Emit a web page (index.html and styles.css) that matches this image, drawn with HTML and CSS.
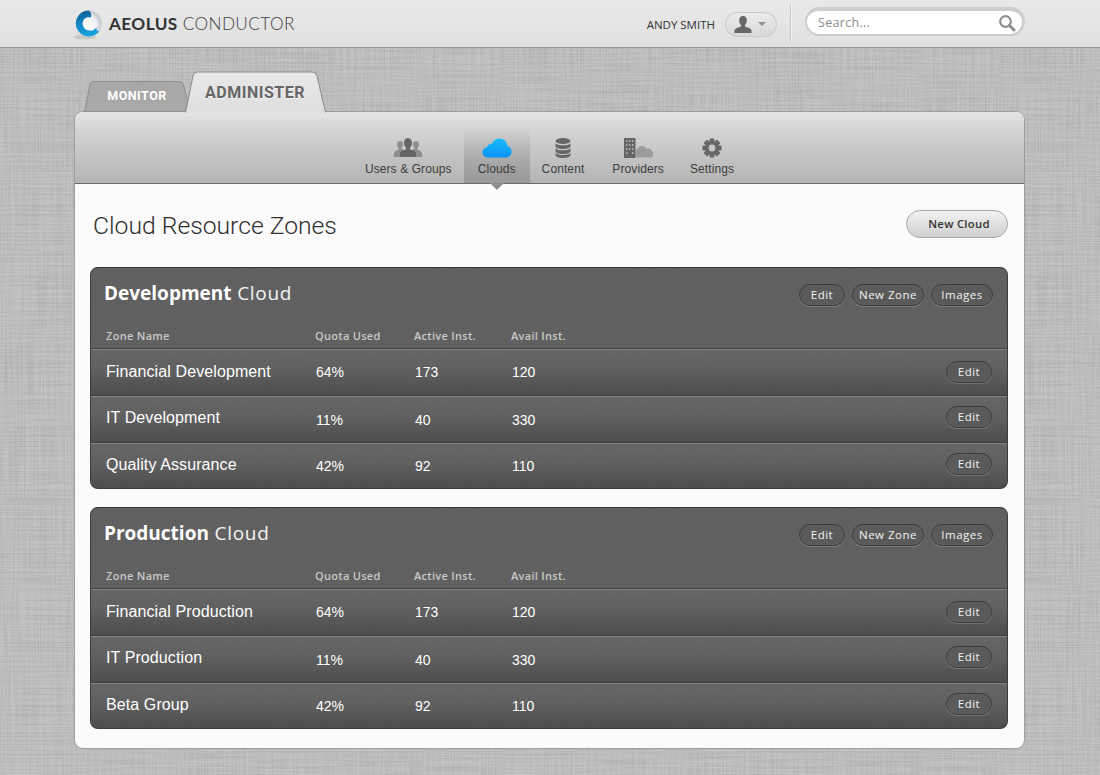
FILE: index.html
```html
<!DOCTYPE html>
<html lang="en">
<head>
<meta charset="utf-8">
<title>Aeolus Conductor</title>
<link rel="stylesheet" href="styles.css">
</head>
<body>
<header class="topbar">
  <div class="brand">
    <svg class="logo" width="32" height="32" viewBox="0 0 32 32">
      <defs>
        <radialGradient id="lg-ball" cx="0.42" cy="0.55" r="0.6"><stop offset="0" stop-color="#ffffff"/><stop offset="0.65" stop-color="#eef0f3"/><stop offset="1" stop-color="#b9bec6"/></radialGradient>
        <linearGradient id="lg-blue" x1="0.3" y1="0" x2="0.6" y2="1"><stop offset="0" stop-color="#0b5c8f"/><stop offset="0.45" stop-color="#1488c6"/><stop offset="1" stop-color="#12a4de"/></linearGradient>
      </defs>
      <ellipse cx="13" cy="28" rx="11" ry="2.500" fill="#b5b5b5" opacity="0.6"/>
      <circle cx="16.500" cy="14.500" r="13" fill="url(#lg-ball)"/>
      <path d="M16.500 1.500A13 13 0 1 0 28 21C26 23 24.500 22.500 24.500 18.500 22.500 21 20 22 17.500 21.500A7 7 0 0 1 12.300 10C14 8 16.500 7.800 19 8.500 20 6 18.500 2.500 16.500 1.500Z" fill="url(#lg-blue)"/>
    </svg>
    <div class="wordmark"><b>AEOLUS</b> CONDUCTOR</div>
  </div>
  <div class="topright">
    <span class="username">ANDY SMITH</span>
    <div class="userpill">
      <svg width="18" height="17" viewBox="0 0 18 17"><path d="M9 0c2.600 0 3.800 2 3.800 4.400 0 2-.8 3.600-1.800 4.600v1.400c2 .9 5.500 1.500 6.500 3.600V17H.5v-3c1-2.100 4.500-2.700 6.500-3.600V9C6 8 5.200 6.400 5.200 4.400 5.200 2 6.400 0 9 0Z" fill="#666"/></svg>
      <i class="caret"></i>
    </div>
    <div class="divider"></div>
    <div class="search">
      <span class="placeholder">Search...</span>
      <svg width="18" height="18" viewBox="0 0 18 18"><circle cx="7.500" cy="7.500" r="5.300" fill="none" stroke="#8f8f8f" stroke-width="2.200"/><path d="M11.500 11.500 16 16" stroke="#8f8f8f" stroke-width="3" stroke-linecap="round"/></svg>
    </div>
  </div>
</header>

<main class="shell">
  <nav class="tabs">
    <a class="tab tab-monitor">
      <svg class="tab-shape" width="106" height="33" viewBox="0 0 106 33"><path d="M0.500 32.500 6 4Q6.700 1.500 9.500 1.500H95Q98.500 1.500 99.500 5L103.500 20 101.500 32.500Z" fill="#a8a8a8" stroke="#8f8f8f"/></svg>
      <span>MONITOR</span>
    </a>
    <a class="tab tab-administer">
      <svg class="tab-shape" width="142" height="42" viewBox="0 0 142 42">
        <defs><linearGradient id="tab-fill" x1="0" y1="0" x2="0" y2="1"><stop offset="0" stop-color="#e9e9e9"/><stop offset="1" stop-color="#dedede"/></linearGradient></defs>
        <path d="M0.500 41.500 8 5Q9 1 12.500 1H127Q131 1 132 5L140.500 41.500" fill="url(#tab-fill)" stroke="#8c8c8c"/>
      </svg>
      <span>ADMINISTER</span>
    </a>
  </nav>

  <section class="card">
    <div class="subnav">
      <a class="subitem">
        <svg width="28" height="20" viewBox="0 0 28 20">
          <g fill="#8f8f8f"><path d="M6 3c2 0 3 1.500 3 3.300 0 1.600-.7 2.800-1.500 3.500v1c1.500.7 2.500 1 3 2V19H0v-4c.6-1.600 2.600-2.400 4.500-3.200v-2C3.700 9.100 3 7.900 3 6.300 3 4.500 4 3 6 3Z"/><path d="M22 3c-2 0-3 1.500-3 3.300 0 1.600.7 2.800 1.500 3.500v1c-1.500.7-2.500 1-3 2V19H28v-4c-.6-1.600-2.600-2.400-4.500-3.200v-2C24.300 9.100 25 7.900 25 6.300 25 4.500 24 3 22 3Z"/></g>
          <path d="M14 0c2.800 0 4 2.200 4 4.700 0 2.200-.8 3.900-2 5v1.600c2.200.9 5 1.700 6 3.500V19H6v-4.200c1-1.800 3.800-2.600 6-3.500V9.700c-1.200-1.100-2-2.800-2-5C10 2.200 11.200 0 14 0Z" fill="#666"/>
        </svg>
        <span>Users &amp; Groups</span>
      </a>
      <a class="subitem active">
        <svg width="30" height="20" viewBox="0 0 30 20">
          <defs><linearGradient id="cloud-fill" x1="0" y1="0" x2="0" y2="1"><stop offset="0" stop-color="#19bdfd"/><stop offset="1" stop-color="#0a93f5"/></linearGradient></defs>
          <path d="M6 19.500C2.500 19.500.500 17 .500 14.300c0-2.800 2-4.800 4.800-5.300.6-2.200 2.400-3.400 4.500-3.200C11.300 2.500 14 .5 17.500.5c4.300 0 7.500 3 7.800 7.200 2.700.8 4.300 3 4.300 6 0 3.300-2.400 5.800-5.800 5.800Z" fill="url(#cloud-fill)"/>
        </svg>
        <span>Clouds</span>
      </a>
      <a class="subitem">
        <svg width="16" height="20" viewBox="0 0 16 20">
          <g fill="#666"><ellipse cx="8" cy="3" rx="7.500" ry="3"/><path d="M.5 5.200C2 6.800 5 7.300 8 7.300s6-.5 7.500-2.100V8c0 1.800-3.500 3-7.500 3S.5 9.800.5 8Z"/><path d="M.5 10.200C2 11.800 5 12.300 8 12.300s6-.5 7.500-2.100V13c0 1.800-3.500 3-7.500 3S.5 14.800.5 13Z"/><path d="M.5 15C2 16.500 5 17 8 17s6-.5 7.500-2v2c0 1.800-3.500 3-7.500 3S.5 18.800.5 17Z"/></g>
        </svg>
        <span>Content</span>
      </a>
      <a class="subitem providers">
        <svg width="29" height="20" viewBox="0 0 29 20">
          <path d="M12 19.500v-8h1.500c.5-2.300 2.200-3.500 4.300-3.500 2.400 0 4 1.200 4.700 3 2-1 5 0 5.500 2.500 1.500.5 1.500 6 -1 6Z" fill="#9b9b9b"/>
          <path d="M0 0h11.500v20H0Z" fill="#666"/>
          <path d="M2 2h1.500v2H2zM5 2h1.500v2H5zM8 2h1.500v2H8zM2 6h1.500v2H2zM5 6h1.500v2H5zM8 6h1.500v2H8zM2 10h1.500v2H2zM5 10h1.500v2H5zM8 10h1.500v2H8zM2 14h1.500v2H2zM8 14h1.500v2H8z" fill="#adadad"/>
        </svg>
        <span>Providers</span>
      </a>
      <a class="subitem">
        <svg width="20" height="20" viewBox="0 0 20 20">
          <g fill="#666">
            <rect x="7.500" y="0.500" width="5" height="19" rx="1"/>
            <rect x="7.500" y="0.500" width="5" height="19" rx="1" transform="rotate(45 10 10)"/>
            <rect x="7.500" y="0.500" width="5" height="19" rx="1" transform="rotate(90 10 10)"/>
            <rect x="7.500" y="0.500" width="5" height="19" rx="1" transform="rotate(135 10 10)"/>
          </g>
          <circle cx="10" cy="10" r="5.100" fill="none" stroke="#666" stroke-width="3"/>
          <circle cx="10" cy="10" r="3.400" fill="#c6c6c6"/>
        </svg>
        <span>Settings</span>
      </a>
    </div>

    <div class="content">
      <div class="pagehead">
        <h1>Cloud Resource Zones</h1>
        <a class="btn-light">New Cloud</a>
      </div>

      <article class="panel">
        <div class="panel-head">
          <h2><b>Development</b> Cloud</h2>
          <div class="actions"><a class="btn-dark b-edit">Edit</a><a class="btn-dark b-zone">New Zone</a><a class="btn-dark b-img">Images</a></div>
        </div>
        <div class="cols"><span>Zone Name</span><span>Quota Used</span><span>Active Inst.</span><span>Avail Inst.</span></div>
        <div class="row r1"><span class="name">Financial Development</span><span class="val">64%</span><span class="val">173</span><span class="val">120</span><a class="btn-dark b-edit">Edit</a></div>
        <div class="row r2"><span class="name">IT Development</span><span class="val">11%</span><span class="val">40</span><span class="val">330</span><a class="btn-dark b-edit">Edit</a></div>
        <div class="row r3"><span class="name">Quality Assurance</span><span class="val">42%</span><span class="val">92</span><span class="val">110</span><a class="btn-dark b-edit">Edit</a></div>
      </article>

      <article class="panel">
        <div class="panel-head">
          <h2><b>Production</b> Cloud</h2>
          <div class="actions"><a class="btn-dark b-edit">Edit</a><a class="btn-dark b-zone">New Zone</a><a class="btn-dark b-img">Images</a></div>
        </div>
        <div class="cols"><span>Zone Name</span><span>Quota Used</span><span>Active Inst.</span><span>Avail Inst.</span></div>
        <div class="row r1"><span class="name">Financial Production</span><span class="val">64%</span><span class="val">173</span><span class="val">120</span><a class="btn-dark b-edit">Edit</a></div>
        <div class="row r2"><span class="name">IT Production</span><span class="val">11%</span><span class="val">40</span><span class="val">330</span><a class="btn-dark b-edit">Edit</a></div>
        <div class="row r3"><span class="name">Beta Group</span><span class="val">42%</span><span class="val">92</span><span class="val">110</span><a class="btn-dark b-edit">Edit</a></div>
      </article>
    </div>
  </section>
</main>
</body>
</html>
```
FILE: styles.css
```css
* { box-sizing: border-box; }
html, body { margin: 0; height: 775px; overflow: hidden; }
body {
  background-color: #c5c5c5;
  background-image:
    url("data:image/svg+xml,%3Csvg xmlns='http://www.w3.org/2000/svg' width='500' height='500'%3E%3Cfilter id='h'%3E%3CfeTurbulence type='fractalNoise' baseFrequency='0.012 0.9' numOctaves='2' seed='3'/%3E%3CfeColorMatrix values='0 0 0 0 0 0 0 0 0 0 0 0 0 0 0 0 0 0 1 -.35'/%3E%3C/filter%3E%3Cfilter id='v'%3E%3CfeTurbulence type='fractalNoise' baseFrequency='0.9 0.012' numOctaves='2' seed='8'/%3E%3CfeColorMatrix values='0 0 0 0 0 0 0 0 0 0 0 0 0 0 0 0 0 0 1 -.35'/%3E%3C/filter%3E%3Crect width='500' height='500' filter='url(%23h)' opacity='.14'/%3E%3Crect width='500' height='500' filter='url(%23v)' opacity='.14'/%3E%3C/svg%3E");
  font-family: "Liberation Sans", Arial, sans-serif;
  color: #333;
}
a { cursor: pointer; }

/* top bar */
.topbar {
  height: 48px;
  padding: 0 75px 0 72px;
  display: flex;
  justify-content: space-between;
  align-items: center;
  background: linear-gradient(#e9e9e9, #e0e0e0);
  border-bottom: 1px solid #989898;
}
.brand { display: flex; align-items: center; gap: 5px; margin-bottom: 1px; }
.logo { display: block; margin-top: 4px; }
.wordmark {
  font-family: Lato, sans-serif;
  font-size: 17.200px;
  letter-spacing: .4px;
  color: #3f3f3f;
  font-weight: 300;
}
.wordmark b { font-weight: 700; color: #333; }
.topright { display: flex; align-items: center; }
.username {
  font-family: "Open Sans", sans-serif;
  font-size: 11.500px;
  color: #333;
  margin-right: 10px;
  margin-top: 1px;
}
.userpill {
  width: 52px; height: 25px;
  border: 1px solid #c8c8c8;
  border-radius: 13px;
  background: linear-gradient(#ebebeb, #d9d9d9);
  display: flex; align-items: center;
  gap: 6px;
  padding-left: 8px;
  margin-top: 1px;
}
.caret { border: 4px solid transparent; border-top: 4px solid #8f8f8f; border-bottom: 0; width: 0; height: 0; }
.divider { width: 1px; height: 37px; background: #c4c4c4; margin: 0 14px 0 13px; box-shadow: 1px 0 0 #f4f4f4; }
.search {
  width: 220px; height: 29px;
  margin-top: -4px;
  border-radius: 15px;
  background: #fff;
  border: solid #cdcdcd;
  border-width: 4px 3px 2px 2px;
  display: flex; align-items: center; justify-content: space-between;
  padding: 0 6px 0 11px;
}
.placeholder { font-family: "Open Sans", sans-serif; font-size: 12.500px; color: #8a8a8a; letter-spacing: .3px; }

/* tabs */
.shell { width: 949px; margin-left: 75px; }
.tabs { height: 64px; display: flex; align-items: flex-end; position: relative; }
.tab { position: relative; display: flex; justify-content: center; font-family: Roboto, sans-serif; font-weight: 700; }
.tab-shape { position: absolute; left: 0; bottom: 0; display: block; }
.tab span { position: relative; }
.tab-monitor {
  width: 106px; height: 33px; margin-left: 9px; z-index: 0;
  font-size: 12.500px; color: #fff; letter-spacing: .5px;
  padding-top: 8px; margin-bottom: -1px;
}
.tab-administer {
  width: 142px; height: 42px; margin-left: -5px; z-index: 2;
  font-size: 16px; color: #666; letter-spacing: .5px;
  padding: 12px 2px 0 0; margin-bottom: -1px;
  text-shadow: 0 1px 0 rgba(255,255,255,.7);
}

/* card */
.card {
  position: relative;
  height: 636px;
  background: #fbfbfb;
  border-radius: 8px;
  box-shadow: 0 0 0 1px rgba(120,120,120,.45);
}
.subnav {
  height: 72px;
  border-radius: 8px 8px 0 0;
  border-bottom: 1px solid #6a6a6a;
  background: linear-gradient(#e5e5e5 0, #d4d4d4 25%, #b4b4b4 100%);
  display: flex; justify-content: center; align-items: flex-end;
}
.subitem {
  position: relative;
  height: 54px;
  padding: 0 13px 7px;
  display: flex; flex-direction: column; align-items: center; justify-content: flex-end; gap: 4px;
  font-size: 12px; color: #3c3c3c; letter-spacing: .1px;
}
.subitem span { line-height: 14px; }
.subitem.active {
  padding: 0 14px 7px;
  margin: 0 -1px;
  background: linear-gradient(rgba(150,150,150,0), #999);
}
.subitem.providers { margin-left: 2px; }
.subitem.active::after {
  content: "";
  position: absolute; left: 50%; top: 54px; margin-left: -7px;
  border: 7px solid transparent; border-top: 7px solid #8c8c8c; border-bottom: 0;
}

/* content */
.content { padding: 0 16px 0 15px; }
.pagehead { height: 83px; display: flex; justify-content: space-between; align-items: flex-start; padding: 26px 0 0 3px; }
h1 { margin: 1px 0 0; font-family: Roboto, sans-serif; font-weight: 300; font-size: 24.700px; line-height: 30px; color: #2f2f2f; }
.btn-light {
  width: 102px; height: 28px;
  border: 1px solid #a8a8a8; border-radius: 14px;
  background: linear-gradient(#f2f2f2, #cfcfcf);
  font-family: "Open Sans", sans-serif;
  font-weight: 600;
  font-size: 11.300px; color: #333;
  display: flex; align-items: center; justify-content: center;
  padding: 0 0 1px 4px;
  letter-spacing: .3px;
  white-space: nowrap;
}
.panel {
  height: 222px;
  margin-bottom: 18px;
  border-radius: 8px;
  border: 1px solid #3c3c3c;
  border-top-color: #353535;
  overflow: hidden;
  background-color: #636363;
  background-image: url("data:image/svg+xml,%3Csvg xmlns='http://www.w3.org/2000/svg' width='200' height='200'%3E%3Cfilter id='n'%3E%3CfeTurbulence type='fractalNoise' baseFrequency='.9' numOctaves='2'/%3E%3CfeColorMatrix values='0 0 0 0 0 0 0 0 0 0 0 0 0 0 0 0 0 0 .5 -.1'/%3E%3C/filter%3E%3Crect width='200' height='200' filter='url(%23n)' opacity='.18'/%3E%3C/svg%3E");
  color: #fff;
}
.panel-head { height: 52px; display: flex; justify-content: space-between; align-items: center; padding: 0 14px 0 13px; }
h2 { margin: -3px 0 0; font-family: "Open Sans", sans-serif; font-weight: 400; font-size: 19px; letter-spacing: .7px; color: #f4f4f4; }
h2 b { font-weight: 700; color: #fff; letter-spacing: 0; }
.actions { display: flex; gap: 7px; margin-top: 1px; }
.btn-dark {
  height: 22px;
  border: 1px solid #3a3a3a; border-radius: 11px;
  box-shadow: 0 1px 0 rgba(255,255,255,.18), inset 0 0 0 1px rgba(255,255,255,.04);
  background: #5a5a5a;
  font-family: "Open Sans", sans-serif;
  font-size: 11.500px; color: #f2f2f2; letter-spacing: .5px;
  display: flex; align-items: center; justify-content: center;
  padding-bottom: 1px;
  white-space: nowrap;
}
.b-edit { width: 46px; }
.b-zone { width: 72px; }
.b-img { width: 62px; }
.cols, .row {
  display: grid;
  grid-template-columns: 209px 99px 97px 1fr 46px;
  align-items: center;
  padding: 0 15px;
}
.cols {
  height: 28px;
  font-family: "Open Sans", sans-serif;
  font-weight: 600;
  font-size: 11px; color: #c9c9c9; letter-spacing: .3px;
  padding-top: 2px;
}
.row {
  height: 47px;
  border-top: 1px solid #3d3d3d;
  box-shadow: inset 0 1px 0 #868686;
  background: linear-gradient(rgba(255,255,255,.04), rgba(255,255,255,0) 45%, rgba(0,0,0,.2));
}
.r3 { height: 46px; }
.name { font-size: 16px; color: #fff; letter-spacing: .1px; }
.val { font-size: 14px; color: #fff; padding-left: 1px; }
.r1 .name { margin-top: -1px; }
.r2 .name { margin-top: -2px; }
.r2 .val { margin-top: 2px; }
.r2 .btn-dark { margin-top: -4px; }
.r3 .name { margin-top: -2px; }
.r3 .val { margin-top: 1px; }
.r3 .btn-dark { margin-top: -3px; }
```
